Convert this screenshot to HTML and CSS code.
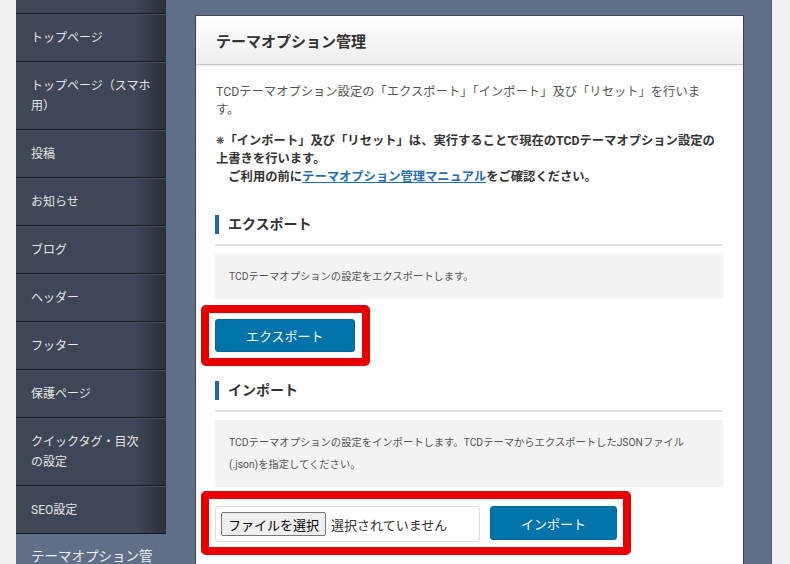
FILE: index.html
```html
<!DOCTYPE html>
<html lang="ja">
<head>
<meta charset="utf-8">
<title>テーマオプション管理</title>
<link rel="stylesheet" href="styles.css">
</head>
<body>
<div class="page">
  <div class="frame">
    <nav class="sidebar">
      <ul class="menu">
        <li class="menu-item">&nbsp;</li>
        <li class="menu-item">トップページ</li>
        <li class="menu-item">トップページ（スマホ<br>用）</li>
        <li class="menu-item">投稿</li>
        <li class="menu-item">お知らせ</li>
        <li class="menu-item">ブログ</li>
        <li class="menu-item">ヘッダー</li>
        <li class="menu-item">フッター</li>
        <li class="menu-item">保護ページ</li>
        <li class="menu-item">クイックタグ・目次<br>の設定</li>
        <li class="menu-item">SEO設定</li>
        <li class="menu-item active">テーマオプション管理</li>
      </ul>
    </nav>
    <main class="main">
      <section class="card">
        <header class="card-header">
          <h1 class="card-title">テーマオプション管理</h1>
        </header>
        <div class="card-body">
          <p class="intro">TCDテーマオプション設定の「エクスポート」「インポート」及び「リセット」を行いま<br>す。</p>
          <p class="intro notice"><span class="mark">❋</span>「インポート」及び「リセット」は、実行することで現在のTCDテーマオプション設定の<br>上書きを行います。<br>　ご利用の前に<a class="link" href="#">テーマオプション管理マニュアル</a>をご確認ください。</p>

          <h2 class="section-title">エクスポート</h2>
          <div class="rule"></div>
          <div class="desc">TCDテーマオプションの設定をエクスポートします。</div>
          <div class="actions">
            <div class="callout">
              <button class="btn-primary" type="button">エクスポート</button>
              <span class="callout-frame callout-frame-a"></span>
            </div>
          </div>

          <h2 class="section-title section-title-import">インポート</h2>
          <div class="rule"></div>
          <div class="desc">TCDテーマオプションの設定をインポートします。TCDテーマからエクスポートしたJSONファイル<br>(.json)を指定してください。</div>
          <div class="actions actions-import">
            <div class="callout">
              <div class="file-field">
                <span class="file-btn">ファイルを選択</span>
                <span class="file-name">選択されていません</span>
              </div>
              <button class="btn-primary btn-import" type="button">インポート</button>
              <span class="callout-frame callout-frame-b"></span>
            </div>
          </div>
        </div>
      </section>
    </main>
  </div>
</div>
</body>
</html>
```
FILE: styles.css
```css
* { box-sizing: border-box; }
html, body { margin: 0; padding: 0; }
body {
  background: #f1f1f1;
  font-family: Roboto, "Noto Sans CJK JP", sans-serif;
  overflow: hidden;
}
.page {
  display: flex;
  height: 564px;
  padding: 0 18px 0 16px;
  overflow: hidden;
}
.frame {
  flex: 1;
  display: flex;
  background: #5e6f87;
  border-right: 1px solid #4f5d72;
  overflow: hidden;
}
.sidebar {
  width: 150px;
  flex: none;
}
.menu {
  list-style: none;
  margin: -34px 0 0 0;
  padding: 0;
}
.menu-item {
  padding: 13px 13px 13px 15px;
  line-height: 20px;
  font-size: 12px;
  color: #e4e6e9;
  white-space: nowrap;
  background: linear-gradient(to right, #3e4755 0%, #3e4755 80%, #2a2f38 100%);
  border-top: 1px solid #4a5360;
  border-bottom: 1px solid #14171b;
}
.menu-item.active {
  background: transparent;
  border: none;
  padding-top: 12px;
  font-size: 13.5px;
  color: #eef0f3;
  white-space: normal;
}
.main {
  flex: 1;
  padding: 15px 27px 0 29px;
  display: flex;
}
.card {
  flex: 1;
  background: #fff;
  border: 1px solid #3d444f;
  border-bottom: none;
  min-height: 700px;
}
.card-header {
  height: 49px;
  padding: 0 20px;
  display: flex;
  align-items: center;
  background: linear-gradient(to bottom, #ffffff, #ededed);
  border-bottom: 1px solid #c4c4c4;
  box-shadow: 0 2px 2px rgba(0, 0, 0, 0.05);
}
.card-title {
  margin: 0;
  font-size: 15px;
  font-weight: bold;
  color: #333;
}
.card-body {
  padding: 18px 20px 0 19px;
}
.intro {
  margin: 0 0 0 1px;
  font-size: 12.3px;
  line-height: 18px;
  color: #555;
}
.notice {
  margin-top: 13px;
  font-weight: bold;
  color: #333;
}
.mark {
  font-family: "DejaVu Sans", sans-serif;
  font-size: 10px;
  vertical-align: 1px;
}
.link {
  color: #1f6fb2;
  text-decoration: underline;
}
.section-title {
  margin: 29px 0 0 0;
  padding-left: 9px;
  border-left: 4px solid #2067ad;
  font-size: 14px;
  line-height: 19px;
  font-weight: bold;
  color: #333;
}
.section-title-import {
  margin-top: 29px;
}
.rule {
  margin-top: 10px;
  height: 2px;
  background: #e4e4e4;
}
.desc {
  margin-top: 8px;
  background: #f3f3f3;
  padding: 12px 14px 11px;
  font-size: 10.3px;
  line-height: 22px;
  color: #555;
}
.actions {
  margin-top: 20px;
  display: flex;
}
.actions-import {
  margin-top: 19px;
}
.callout {
  position: relative;
  display: flex;
  align-items: flex-start;
}
.callout-frame {
  position: absolute;
  border: 8px solid #e60000;
  border-radius: 5px;
  pointer-events: none;
}
.callout-frame-a {
  top: -14px;
  right: -15px;
  bottom: -14px;
  left: -14px;
}
.callout-frame-b {
  top: -15px;
  right: -14px;
  bottom: -13px;
  left: -14px;
}
.btn-primary {
  height: 33px;
  padding: 0 30px;
  background: #0073aa;
  border: 1px solid #006799;
  border-radius: 3px;
  color: #fff;
  font-family: Roboto, "Noto Sans CJK JP", sans-serif;
  font-size: 13px;
}
.btn-import {
  height: 34px;
  margin-left: 10px;
}
.file-field {
  width: 265px;
  height: 36px;
  padding: 5px;
  border: 1px solid #dcdcdc;
  border-radius: 3px;
  display: flex;
  align-items: center;
}
.file-btn {
  height: 24px;
  padding: 0 6px;
  display: flex;
  align-items: center;
  background: #efefef;
  border: 1px solid #767676;
  border-radius: 2px;
  font-size: 13px;
  color: #000;
}
.file-name {
  margin-left: 5px;
  font-size: 13px;
  color: #333;
}
```
